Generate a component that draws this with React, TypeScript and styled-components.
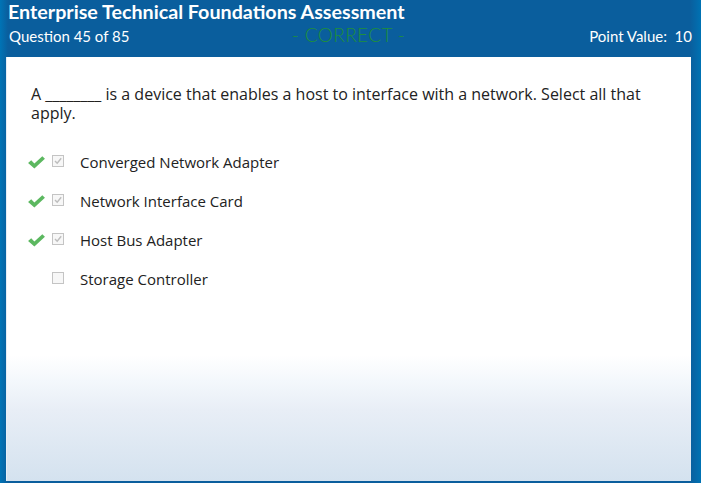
import React from "react";
import styled, { createGlobalStyle } from "styled-components";

const GlobalStyle = createGlobalStyle`
  html, body {
    margin: 0;
    padding: 0;
    background: #0a5e9d;
  }
  body {
    font-family: "Open Sans", "Liberation Sans", sans-serif;
  }
`;

const Frame = styled.div`
  width: 701px;
  height: 483px;
  box-sizing: border-box;
  background: linear-gradient(90deg, #0074b6 0px, #0a5e9d 8px, #0a5e9d 690px, #0072b3 701px);
  display: flex;
  flex-direction: column;
  padding: 0 10px 2px 6px;
`;

const Header = styled.header`
  height: 57px;
  display: flex;
  flex-direction: column;
  color: #fff;
`;

const Title = styled.h1`
  margin: 0;
  padding: 0 0 0 2px;
  font-family: Lato, "Open Sans", sans-serif;
  font-weight: 700;
  font-size: 19.7px;
  line-height: 23px;
`;

const SubBar = styled.div`
  display: grid;
  grid-template-columns: 1fr auto 1fr;
  align-items: center;
  margin-top: 5px;
  font-family: Lato, "Open Sans", sans-serif;
  font-size: 15px;
  line-height: 17px;
`;

const Counter = styled.span`
  padding-left: 3px;
`;

const Status = styled.span`
  color: #1f8f3c;
  font-weight: 300;
  font-size: 19px;
  letter-spacing: 0.4px;
  margin-top: -4px;
`;

const Points = styled.span`
  justify-self: end;
  margin-right: -1px;
`;

const Panel = styled.main`
  flex: 1;
  background: linear-gradient(
    180deg,
    #ffffff 0px,
    #ffffff 298px,
    #f4f8fc 323px,
    #e8eef6 353px,
    #d4e2ef 424px
  );
  border-left: 1px solid #e6eef6;
  padding: 28px 24px 0 24px;
  color: #222;
`;

const Question = styled.p`
  margin: 0;
  font-size: 16px;
  line-height: 19px;
  max-width: 630px;
`;

const Options = styled.ul`
  list-style: none;
  margin: 29px 0 0 0;
  padding: 0;
  display: flex;
  flex-direction: column;
  gap: 19px;
`;

const Option = styled.li`
  display: flex;
  align-items: center;
  height: 20px;
  font-size: 15px;
`;

const Mark = styled.span`
  width: 20px;
  display: flex;
  justify-content: flex-start;
  margin-left: -4px;
  margin-right: 5px;
`;

const Box = styled.span`
  width: 12px;
  height: 12px;
  box-sizing: border-box;
  border: 1px solid #c4c4c4;
  background: #f7f7f7;
  display: flex;
  align-items: center;
  justify-content: center;
  margin-right: 16px;
  margin-top: -2px;
`;

const Label = styled.span``;

const CorrectMark = () => (
  <svg width="19" height="15" viewBox="0 0 18 14">
    <path
      d="M1 7.5 L4 4.8 L7 8 L14.5 1 L17 3.5 L7 12.8 Z"
      fill="#5cb860"
    />
  </svg>
);

const Tick = () => (
  <svg width="10" height="10" viewBox="0 0 10 10">
    <path d="M2 5 L4.2 7.3 L8.2 2.3" fill="none" stroke="#bdbdbd" strokeWidth="1.4" />
  </svg>
);

const options = [
  { label: "Converged Network Adapter", correct: true, checked: true },
  { label: "Network Interface Card", correct: true, checked: true },
  { label: "Host Bus Adapter", correct: true, checked: true },
  { label: "Storage Controller", correct: false, checked: false },
];

export default function App() {
  return (
    <>
      <GlobalStyle />
      <Frame>
        <Header>
          <Title>Enterprise Technical Foundations Assessment</Title>
          <SubBar>
            <Counter>Question 45 of 85</Counter>
            <Status>- CORRECT -</Status>
            <Points>Point Value:&nbsp; 10</Points>
          </SubBar>
        </Header>
        <Panel>
          <Question>
            A ________ is a device that enables a host to interface with a network. Select all
            that apply.
          </Question>
          <Options>
            {options.map((o) => (
              <Option key={o.label}>
                <Mark>{o.correct && <CorrectMark />}</Mark>
                <Box>{o.checked && <Tick />}</Box>
                <Label>{o.label}</Label>
              </Option>
            ))}
          </Options>
        </Panel>
      </Frame>
    </>
  );
}
